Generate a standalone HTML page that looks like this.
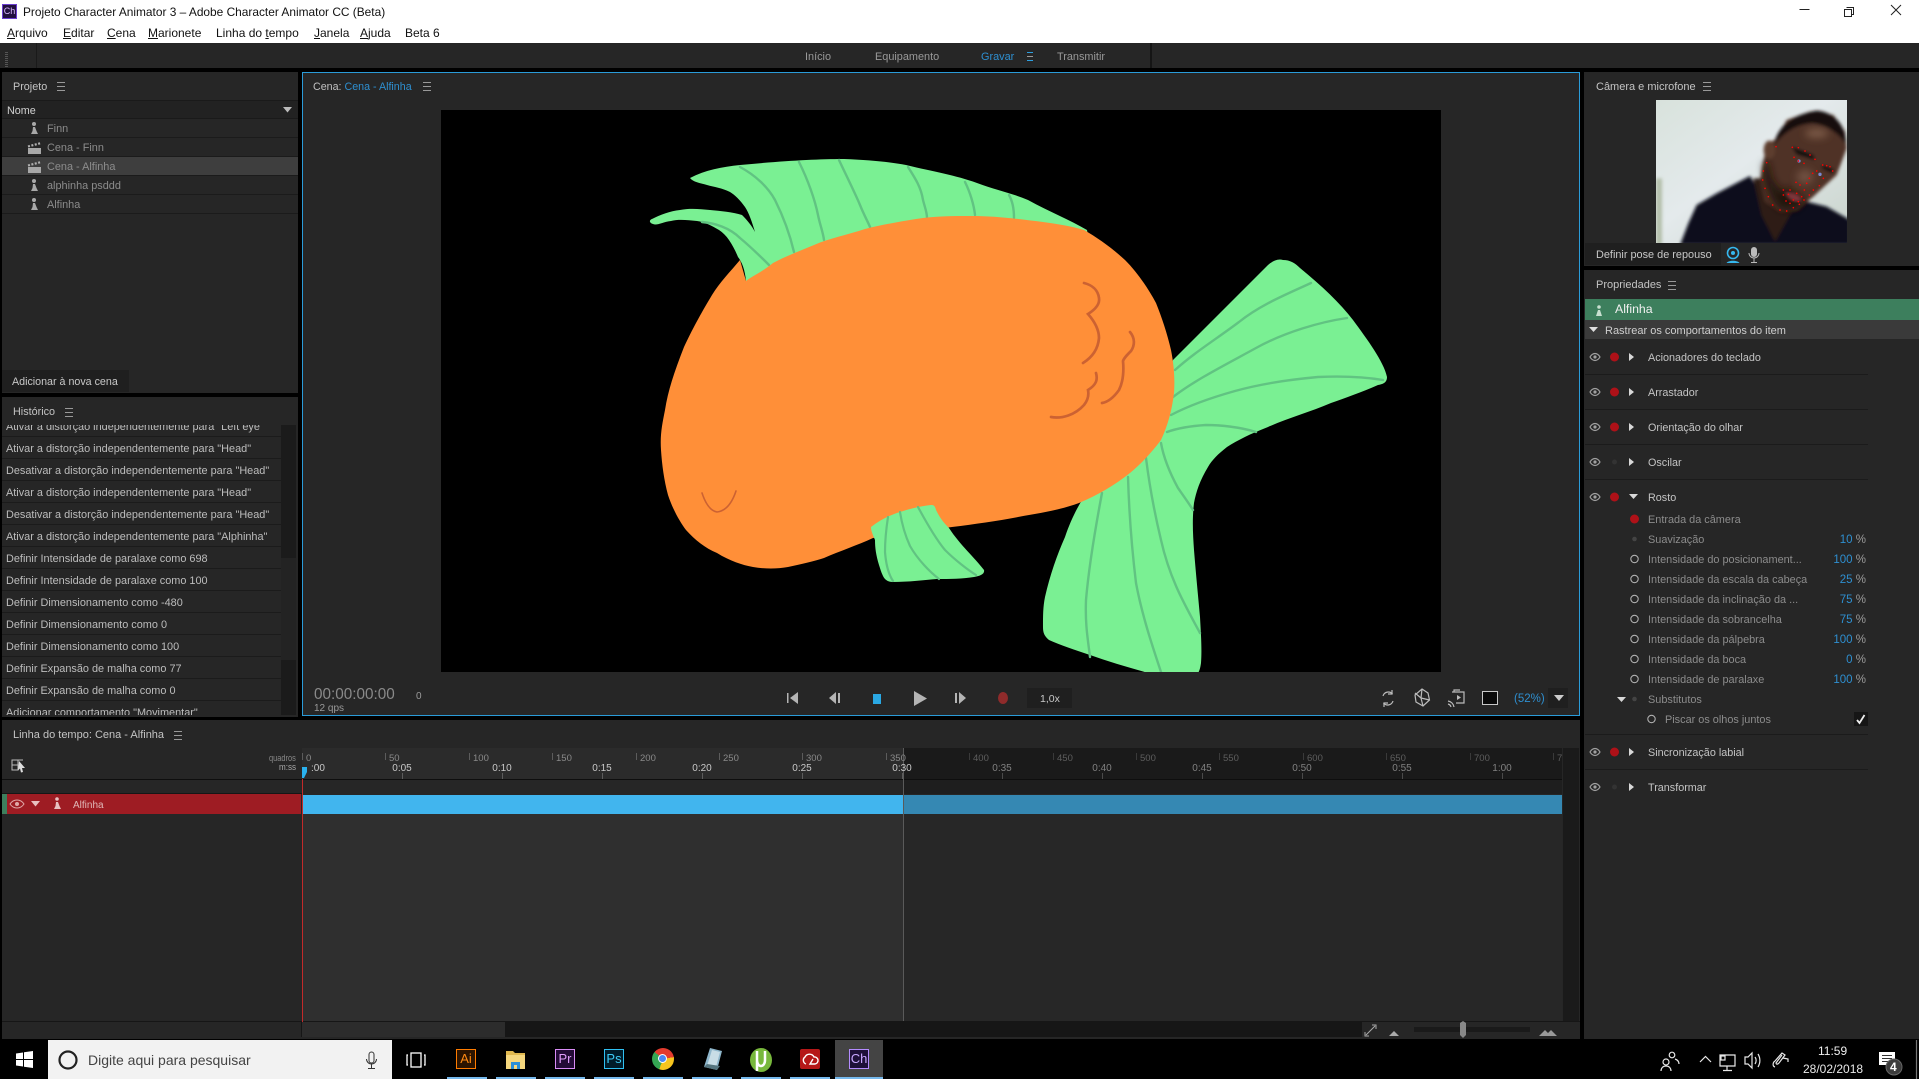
<!DOCTYPE html>
<html lang="pt"><head><meta charset="utf-8"><title>Adobe Character Animator</title>
<style>
html,body{margin:0;padding:0;background:#000;}
body{position:relative;width:1919px;height:1079px;overflow:hidden;font-family:"Liberation Sans",sans-serif;font-size:11px;color:#aaa;}
.b{position:absolute;}
.t{position:absolute;white-space:nowrap;line-height:14px;}
svg{position:absolute;overflow:visible;}
.p{background:#262626;position:absolute;}
.m{position:absolute;width:8px;height:7px;border-top:1px solid #999;border-bottom:1px solid #999;}
.m:after{content:"";position:absolute;left:0;right:0;top:3px;height:1px;background:#999;}
.sep{position:absolute;height:1px;background:#1b1b1b;}
.v{position:absolute;white-space:nowrap;line-height:14px;right:53px;color:#2e8fd0;font-size:11.5px;margin-top:1px;}
.v i{font-style:normal;color:#9a9a9a;}
.h{color:#c4c4c4;font-size:10.8px;margin-top:1px;}
.n{color:#8c8c8c;font-size:10.9px;margin-top:1px;}
.r{color:#bdbdbd;font-size:10.9px;margin-top:1px;}
.f{font-size:9.5px;color:#8a8a8a;margin-top:1px;}
.f2{font-size:9.5px;color:#5e5e5e;margin-top:1px;}
.s{font-size:10px;color:#c8c8c8;transform:translateX(-50%);margin-top:1px;}
.s2{font-size:10px;color:#808080;transform:translateX(-50%);margin-top:1px;}
.tk{position:absolute;width:1px;background:#5c5c5c;}
.ub{position:absolute;top:1077px;height:2px;background:#76b9ed;width:40px;}
.ap{position:absolute;top:1049px;width:18px;height:18px;border:1px solid;text-align:center;line-height:18px;font-size:13px;}
</style></head><body>

<!-- title bar -->
<div class="b" style="left:0;top:0;width:1919px;height:43px;background:#fff"></div>
<div class="b" style="left:2px;top:4px;width:13px;height:13px;background:#22103f;border:1px solid #6b3fd0;color:#d8b8ff;font-size:9px;line-height:13px;text-align:center">Ch</div>
<div class="t" style="left:23px;top:5px;color:#111;font-size:11.9px">Projeto Character Animator 3 – Adobe Character Animator CC (Beta)</div>
<div class="t" style="left:7px;top:26px;color:#111;font-size:12px"><u>A</u>rquivo</div>
<div class="t" style="left:63px;top:26px;color:#111;font-size:12px"><u>E</u>ditar</div>
<div class="t" style="left:107px;top:26px;color:#111;font-size:12px"><u>C</u>ena</div>
<div class="t" style="left:148px;top:26px;color:#111;font-size:12px"><u>M</u>arionete</div>
<div class="t" style="left:216px;top:26px;color:#111;font-size:12px">Linha do <u>t</u>empo</div>
<div class="t" style="left:314px;top:26px;color:#111;font-size:12px"><u>J</u>anela</div>
<div class="t" style="left:360px;top:26px;color:#111;font-size:12px"><u>A</u>juda</div>
<div class="t" style="left:405px;top:26px;color:#111;font-size:12px">Beta 6</div>
<svg style="left:0;top:0" width="1919" height="43" fill="none" stroke="#222" stroke-width="1">
<path d="M1799.5 9.5h10"/><path d="M1846.5 7.5h7v7h-2M1844.5 9.5h7v7h-7z"/><path d="M1891 5l10 10M1901 5l-10 10"/></svg>

<!-- toolbar -->
<div class="p" style="left:0;top:43px;width:1919px;height:25px"></div>
<div class="b" style="left:5px;top:52px;width:3px;height:16px;background:repeating-linear-gradient(#555 0 1px,#262626 1px 2px)"></div>
<div class="b" style="left:36px;top:43px;width:1px;height:25px;background:#1a1a1a"></div>
<div class="b" style="left:1150px;top:43px;width:2px;height:25px;background:#151515"></div>
<div class="t" style="left:805px;top:50px;color:#999;font-size:10.9px">Início</div>
<div class="t" style="left:875px;top:50px;color:#999;font-size:10.9px">Equipamento</div>
<div class="t" style="left:981px;top:50px;color:#2e8fd0;font-size:10.9px">Gravar</div>
<div class="m" style="left:1027px;top:52px;width:6px;border-color:#2e9fe0"></div>
<div class="t" style="left:1057px;top:50px;color:#999;font-size:10.9px">Transmitir</div>

<!-- project panel -->
<div class="p" style="left:2px;top:72px;width:296px;height:321px"></div>
<div class="t h" style="left:13px;top:79px">Projeto</div><div class="m" style="left:57px;top:82px"></div>
<div class="b" style="left:2px;top:100px;width:296px;height:19px;background:#222;border-top:1px solid #1a1a1a;border-bottom:1px solid #1a1a1a;box-sizing:border-box"></div>
<div class="t" style="left:7px;top:104px;color:#d2d2d2;font-size:10.8px">Nome</div>
<svg style="left:283px;top:107px" width="10" height="6"><path d="M0 0h9L4.500 5.500z" fill="#bbb"/></svg>
<div class="b" style="left:2px;top:157px;width:296px;height:18px;background:#3e3e3e"></div>
<div class="sep" style="left:2px;top:137px;width:296px"></div><div class="sep" style="left:2px;top:156px;width:296px"></div><div class="sep" style="left:2px;top:175px;width:296px"></div><div class="sep" style="left:2px;top:194px;width:296px"></div><div class="sep" style="left:2px;top:213px;width:296px"></div>
<div class="t n" style="left:47px;top:121px">Finn</div>
<div class="t n" style="left:47px;top:140px">Cena - Finn</div>
<div class="t n" style="left:47px;top:159px">Cena - Alfinha</div>
<div class="t n" style="left:47px;top:178px">alphinha psddd</div>
<div class="t n" style="left:47px;top:197px">Alfinha</div>
<svg style="left:0;top:0" width="60" height="220" fill="#a8a8a8">
<g><circle cx="34" cy="124" r="2"/><path d="M33 127h2l1.500 4 1.500 3h-7l1.500-3z"/></g>
<g transform="translate(0,57)"><circle cx="34" cy="124" r="2"/><path d="M33 127h2l1.500 4 1.500 3h-7l1.500-3z"/></g>
<g transform="translate(0,76)"><circle cx="34" cy="124" r="2"/><path d="M33 127h2l1.500 4 1.500 3h-7l1.500-3z"/></g>
<path d="M28 148h13v6H28z"/><path d="M28 146.500l13-3.500" stroke="#b0b0b0" stroke-width="2.200" stroke-dasharray="2 1.500" fill="none"/>
<path d="M28 167h13v6H28z"/><path d="M28 165.500l13-3.500" stroke="#b0b0b0" stroke-width="2.200" stroke-dasharray="2 1.500" fill="none"/>
</svg>
<div class="b" style="left:2px;top:370px;width:127px;height:22px;background:#1f1f1f"></div>
<div class="t" style="left:12px;top:375px;color:#c8c8c8;font-size:10.7px">Adicionar à nova cena</div>

<!-- history panel -->
<div class="p" style="left:2px;top:397px;width:296px;height:320px"></div>
<div class="t h" style="left:13px;top:404px">Histórico</div><div class="m" style="left:65px;top:408px"></div>
<div class="b" style="left:281px;top:425px;width:15px;height:290px;background:#1b1b1b"></div>
<div class="b" style="left:281px;top:558px;width:15px;height:102px;background:#232323"></div>
<div class="b" style="left:2px;top:425px;width:279px;height:290px;overflow:hidden">
<div class="t r" style="left:4px;top:-6px">Ativar a distorção independentemente para "Left eye"</div>
<div class="t r" style="left:4px;top:16px">Ativar a distorção independentemente para "Head"</div>
<div class="t r" style="left:4px;top:38px">Desativar a distorção independentemente para "Head"</div>
<div class="t r" style="left:4px;top:60px">Ativar a distorção independentemente para "Head"</div>
<div class="t r" style="left:4px;top:82px">Desativar a distorção independentemente para "Head"</div>
<div class="t r" style="left:4px;top:104px">Ativar a distorção independentemente para "Alphinha"</div>
<div class="t r" style="left:4px;top:126px">Definir Intensidade de paralaxe como 698</div>
<div class="t r" style="left:4px;top:148px">Definir Intensidade de paralaxe como 100</div>
<div class="t r" style="left:4px;top:170px">Definir Dimensionamento como -480</div>
<div class="t r" style="left:4px;top:192px">Definir Dimensionamento como 0</div>
<div class="t r" style="left:4px;top:214px">Definir Dimensionamento como 100</div>
<div class="t r" style="left:4px;top:236px">Definir Expansão de malha como 77</div>
<div class="t r" style="left:4px;top:258px">Definir Expansão de malha como 0</div>
<div class="t r" style="left:4px;top:280px">Adicionar comportamento "Movimentar"</div>
<div class="sep" style="left:0;top:11px;width:279px"></div><div class="sep" style="left:0;top:33px;width:279px"></div><div class="sep" style="left:0;top:55px;width:279px"></div><div class="sep" style="left:0;top:77px;width:279px"></div><div class="sep" style="left:0;top:99px;width:279px"></div><div class="sep" style="left:0;top:121px;width:279px"></div><div class="sep" style="left:0;top:143px;width:279px"></div><div class="sep" style="left:0;top:165px;width:279px"></div><div class="sep" style="left:0;top:187px;width:279px"></div><div class="sep" style="left:0;top:209px;width:279px"></div><div class="sep" style="left:0;top:231px;width:279px"></div><div class="sep" style="left:0;top:253px;width:279px"></div><div class="sep" style="left:0;top:275px;width:279px"></div>
</div>

<!-- scene panel -->
<div class="p" style="left:302px;top:72px;width:1276px;height:642px;border:1px solid #2a9bd8"></div>
<div class="t" style="left:313px;top:80px;color:#c0c0c0;font-size:10.7px">Cena: <span style="color:#2e8fd0">Cena - Alfinha</span></div>
<div class="m" style="left:423px;top:82px"></div>
<div class="b" style="left:441px;top:110px;width:1000px;height:562px;background:#000"></div>

<!-- fish -->
<svg style="left:0;top:0" width="1919" height="1079">
<defs><clipPath id="cv"><rect x="441" y="110" width="1000" height="562"/></clipPath></defs>
<g clip-path="url(#cv)">
<!-- dorsal fin -->
<path fill="#7af093" d="M690 178C705 170 722 167 740 165C783 161 815 159 844 159C870 160 890 162 906 165C935 172 955 175 977 183C995 190 1012 193 1028 200C1050 212 1070 220 1087 230L1100 300L800 300L746 281C745 270 742 262 738 257C733 245 727 235 719 230C712 226 705 222 697 221C688 220 678 219 671 221C662 222 657 226 653 224C649 223 649 220 652 219C660 215 670 211 680 210C690 208 700 209 710 210C720 211 733 212 742 215C747 220 752 226 755 232C752 222 749 213 745 207C740 200 735 195 730 192C722 188 714 187 707 185C700 183 693 182 690 178Z"/>
<g fill="none" stroke="#61c382" stroke-width="2.400" stroke-linecap="round">
<path d="M740 167C755 175 768 187 775 200C785 220 790 235 794 252"/>
<path d="M799 162C808 180 815 200 818 215C820 225 823 232 824 240"/>
<path d="M839 160C846 175 855 193 860 205C864 215 868 222 870 227"/>
<path d="M908 167C915 178 921 187 923 200C925 208 927 212 927 218"/>
<path d="M965 182C970 192 974 205 975 215"/>
<path d="M1009 195C1013 202 1014 210 1014 218"/>
<path d="M702 222C715 223 730 228 740 238C752 248 762 258 769 265"/>
</g>
<!-- tail -->
<path fill="#7af093" d="M1173 360L1268 265Q1276 258 1283 260C1290 260 1295 263 1300 268C1322 286 1340 303 1353 320C1367 339 1384 362 1387 377C1387 382 1384 384 1378 385C1362 392 1345 398 1331 403C1310 412 1288 418 1268 427C1250 434 1238 440 1227 447C1218 454 1212 460 1208 467C1200 480 1196 492 1194 503C1192 520 1193 535 1194 550C1196 575 1198 595 1200 617C1201 635 1202 650 1201 663C1200 670 1199 672 1197 674L1152 674C1130 668 1110 662 1090 655C1075 650 1060 645 1049 640C1044 636 1043 632 1043 627C1043 615 1043 607 1045 597C1050 575 1057 555 1065 537C1070 522 1076 510 1082 500L1140 440Z"/>
<g fill="none" stroke="#61c382" stroke-width="2.400" stroke-linecap="round">
<path d="M1311 283C1285 295 1260 305 1239 322C1215 340 1195 352 1175 370"/>
<path d="M1347 318C1320 322 1285 332 1256 348C1225 365 1195 380 1173 397"/>
<path d="M1383 380C1365 377 1340 376 1318 377C1285 380 1260 384 1235 391C1210 398 1190 405 1171 415"/>
<path d="M1256 432C1240 427 1220 425 1206 425C1190 426 1178 428 1167 432"/>
<path d="M1161 443C1164 460 1172 477 1178 488C1185 498 1190 505 1193 510"/>
<path d="M1146 458C1150 490 1155 515 1161 540C1170 580 1185 605 1200 633"/>
<path d="M1128 477C1129 510 1132 550 1136 583C1142 615 1152 645 1161 672"/>
<path d="M1102 493C1095 530 1089 565 1086 600C1085 625 1088 640 1090 657"/>
</g>
<!-- body -->
<path fill="#ff8f38" d="M746 281L740 260C730 272 720 282 712 295C700 315 692 330 684 347C675 370 668 390 665 410C662 425 660 435 661 450C662 465 664 480 668 495C673 510 680 522 686 530C695 540 705 548 717 553C730 561 742 565 753 567C765 569 777 569 788 567C802 564 815 561 824 558C840 551 858 545 873 538L952 527C975 524 998 521 1018 517C1040 513 1060 510 1079 503C1098 495 1115 485 1130 473C1142 463 1152 452 1161 440C1168 425 1172 410 1174 393C1175 380 1174 365 1171 350C1167 333 1162 318 1156 303C1148 288 1137 272 1125 260C1112 248 1098 238 1084 230C1071 226 1057 224 1043 222C1020 219 995 216 972 216C953 216 935 216 916 219C898 222 880 225 865 229C847 235 830 238 814 245C800 251 786 256 773 263C762 272 754 275 746 281Z"/>
<!-- gills -->
<g fill="none" stroke="#cc6232" stroke-width="2.700" stroke-linecap="round">
<path d="M1084 283C1092 285 1098 290 1099 298C1100 304 1096 309 1088 314C1095 322 1099 330 1099 338C1098 350 1091 358 1083 363" />
<path d="M1130 332C1135 338 1135 345 1131 351C1127 355 1124 358 1123 361C1124 372 1123 382 1119 390C1114 397 1108 402 1102 403"/>
<path d="M1096 373C1098 380 1096 385 1088 390C1089 395 1088 400 1084 405C1075 415 1062 419 1051 417"/>
<path stroke-width="1.600" d="M702 493C706 505 711 511 717 512C726 511 732 503 736 491"/>
</g>
<!-- pectoral -->
<path fill="#7af093" d="M871 527C880 520 890 515 900 512C912 508 922 506 931 505C934 505 935 506 936 510C941 520 945 524 949 528C960 545 975 558 984 570C985 574 980 576 974 577C962 579 950 579 937 579C925 580 908 582 893 582C888 582 885 580 883 576C881 572 880 568 879 565C876 555 875 548 875 540C872 533 871 530 871 527Z"/>
<g fill="none" stroke="#61c382" stroke-width="2.200" stroke-linecap="round">
<path d="M888 517C886 530 885 542 885 552C886 565 889 575 893 581"/>
<path d="M900 512C902 525 905 535 910 546C918 560 930 572 939 579"/>
<path d="M918 507C925 520 935 538 945 550C955 560 968 570 976 575"/>
</g>
</g>
</svg>

<!-- transport -->
<div class="t" style="left:314px;top:688px;color:#8a8a8a;font-size:15.300px">00:00:00:00</div>
<div class="t" style="left:416px;top:690px;color:#9a9a9a;font-size:10px">0</div>
<div class="t" style="left:314px;top:702px;color:#9a9a9a;font-size:10px">12 qps</div>
<svg style="left:0;top:0" width="1919" height="720">
<g fill="#b4b4b4">
<path d="M787 693h1.500v10H787zM798 692v12l-8-6z"/>
<path d="M838 693h2v10h-2zM836 692v12l-7-6z"/>
<path d="M914 691l13 7.500-13 7.500z"/>
<path d="M955 693h2v10h-2zM959 692l7 6-7 6z"/>
</g>
<rect x="873" y="694" width="8" height="10" fill="#2aa8e3"/>
<ellipse cx="1003" cy="698" rx="5" ry="6" fill="#8f2b2b"/>
<rect x="1027" y="688" width="45" height="20" fill="#1f1f1f"/>
<rect x="1548" y="688" width="20" height="20" fill="#1f1f1f"/>
<path d="M1554 695h10l-5 6z" fill="#ccc"/>
<g fill="none" stroke="#bbb" stroke-width="1.200">
<path d="M1383 696a5.500 5.500 0 0 1 9.500-2M1393 701a5.500 5.500 0 0 1-9.500 2"/>
<path d="M1392 690v4h-4M1384 707v-4h4"/>
<path d="M1422 689l6 4 1.500 7-6.500 6-7-4-1-7zM1422 689l-1 9 8.500 2M1421 698l-6-5M1421 698l2 8"/>
<path d="M1452 692h12v11h-8M1454 692v-2h6"/>
<path d="M1448 701a7 7 0 0 1 6 6M1448 704a4 4 0 0 1 3 3"/>
</g>
<path d="M1457 695l4 2.500-4 2.500z" fill="#bbb"/>
<rect x="1482.500" y="691.500" width="15" height="13" fill="#0a0a0a" stroke="#c8c8c8"/>
</svg>
<div class="t" style="left:1040px;top:692px;color:#c8c8c8;font-size:10.500px">1,0x</div>
<div class="t" style="left:1514px;top:692px;color:#2e8fd0;font-size:11.500px">(52%)</div>

<!-- timeline panel -->
<div class="p" style="left:2px;top:720px;width:1578px;height:319px"></div>
<div class="t h" style="left:13px;top:727px;font-size:11px">Linha do tempo: Cena - Alfinha</div>
<div class="m" style="left:174px;top:731px"></div>
<div class="b" style="left:302px;top:748px;width:601px;height:31px;background:#2b2b2b"></div>
<div class="b" style="left:903px;top:748px;width:659px;height:31px;background:#1a1a1a"></div>
<div class="b" style="left:2px;top:779px;width:1560px;height:1px;background:#0e0e0e"></div>
<div class="b" style="left:903px;top:780px;width:659px;height:14px;background:#1e1e1e"></div>
<div class="b" style="left:302px;top:814px;width:601px;height:207px;background:#2f2f2f"></div>
<div class="b" style="left:903px;top:814px;width:659px;height:207px;background:#272727"></div>
<div class="b" style="left:1563px;top:748px;width:16px;height:273px;background:#1a1a1a"></div>
<div class="b" style="left:2px;top:1021px;width:1578px;height:1px;background:#161616"></div>
<div class="b" style="left:504px;top:1022px;width:858px;height:15px;background:#161616"></div>
<div class="b" style="left:301px;top:1022px;width:203px;height:15px;background:#2c2c2c;border-left:1px solid #161616"></div>
<div class="b" style="left:2px;top:793px;width:300px;height:1px;background:#161616"></div>
<div class="b" style="left:2px;top:794px;width:5px;height:20px;background:#3d7f5d"></div>
<div class="b" style="left:7px;top:794px;width:294px;height:20px;background:#9e1c23"></div>
<div class="b" style="left:302px;top:795px;width:601px;height:19px;background:#41b5ee"></div>
<div class="b" style="left:903px;top:795px;width:659px;height:19px;background:#3588b3"></div>
<div class="b" style="left:903px;top:748px;width:1px;height:273px;background:#5a5a5a"></div>
<div class="b" style="left:302px;top:779px;width:1px;height:243px;background:#c22a2a"></div>
<div class="t" style="left:73px;top:799px;color:#e0b8b8;font-size:10px">Alfinha</div>
<svg style="left:0;top:0" width="320" height="830" >
<path d="M10 804c2-3 4-4 7-4s5 1 7 4c-2 3-4 4-7 4s-5-1-7-4z" fill="none" stroke="#e0a8a8"/>
<circle cx="17" cy="804" r="2" fill="#e0a8a8"/>
<path d="M31 801h9l-4.500 5.500z" fill="#e8c0c0"/>
<circle cx="57" cy="799" r="1.800" fill="#e8c0c0"/><path d="M56 802h2l1.500 4 1.500 3h-7l1.500-3z" fill="#e8c0c0"/>
<path d="M302 767l5 0v5l-3 6-2 0z" fill="#2ab1ee"/>
<g fill="none" stroke="#bbb"><path d="M12 760h6v5h-6zM12 765h6v5h-6zM18 760h5"/></g>
<path d="M19 761l6 7-3 0 1 4-2 .5-1-4-2 2z" fill="#ddd"/>
</svg>
<div class="t" style="left:269px;top:752px;color:#888;font-size:9.500px;transform:scaleX(.78);transform-origin:left">quadros</div>
<div class="t" style="left:279px;top:761px;color:#aaa;font-size:9.500px;transform:scaleX(.85);transform-origin:left">m:ss</div>
<div class="t" style="left:311px;top:762px;color:#c8c8c8;font-size:10px">:00</div>

<!-- ruler labels -->
<div class="tk" style="left:302px;top:753px;height:7px"></div><div class="t f" style="left:306px;top:751px">0</div>
<div class="tk" style="left:385px;top:753px;height:7px"></div><div class="t f" style="left:389px;top:751px">50</div>
<div class="tk" style="left:469px;top:753px;height:7px"></div><div class="t f" style="left:473px;top:751px">100</div>
<div class="tk" style="left:552px;top:753px;height:7px"></div><div class="t f" style="left:556px;top:751px">150</div>
<div class="tk" style="left:636px;top:753px;height:7px"></div><div class="t f" style="left:640px;top:751px">200</div>
<div class="tk" style="left:719px;top:753px;height:7px"></div><div class="t f" style="left:723px;top:751px">250</div>
<div class="tk" style="left:802px;top:753px;height:7px"></div><div class="t f" style="left:806px;top:751px">300</div>
<div class="tk" style="left:886px;top:753px;height:7px"></div><div class="t f" style="left:890px;top:751px">350</div>
<div class="tk" style="left:969px;top:753px;height:7px;background:#3a3a3a"></div><div class="t f2" style="left:973px;top:751px">400</div>
<div class="tk" style="left:1053px;top:753px;height:7px;background:#3a3a3a"></div><div class="t f2" style="left:1057px;top:751px">450</div>
<div class="tk" style="left:1136px;top:753px;height:7px;background:#3a3a3a"></div><div class="t f2" style="left:1140px;top:751px">500</div>
<div class="tk" style="left:1219px;top:753px;height:7px;background:#3a3a3a"></div><div class="t f2" style="left:1223px;top:751px">550</div>
<div class="tk" style="left:1303px;top:753px;height:7px;background:#3a3a3a"></div><div class="t f2" style="left:1307px;top:751px">600</div>
<div class="tk" style="left:1386px;top:753px;height:7px;background:#3a3a3a"></div><div class="t f2" style="left:1390px;top:751px">650</div>
<div class="tk" style="left:1470px;top:753px;height:7px;background:#3a3a3a"></div><div class="t f2" style="left:1474px;top:751px">700</div>
<div class="tk" style="left:1553px;top:753px;height:7px;background:#3a3a3a"></div><div class="b" style="left:1557px;top:751px;width:5px;height:15px;overflow:hidden"><div class="t f2" style="left:0;top:0">750</div></div>

<div class="t s" style="left:402px;top:761px">0:05</div><div class="tk" style="left:402px;top:773px;height:6px"></div>
<div class="t s" style="left:502px;top:761px">0:10</div><div class="tk" style="left:502px;top:773px;height:6px"></div>
<div class="t s" style="left:602px;top:761px">0:15</div><div class="tk" style="left:602px;top:773px;height:6px"></div>
<div class="t s" style="left:702px;top:761px">0:20</div><div class="tk" style="left:702px;top:773px;height:6px"></div>
<div class="t s" style="left:802px;top:761px">0:25</div><div class="tk" style="left:802px;top:773px;height:6px"></div>
<div class="t s" style="left:902px;top:761px">0:30</div><div class="tk" style="left:902px;top:773px;height:6px"></div>
<div class="t s2" style="left:1002px;top:761px">0:35</div><div class="tk" style="left:1002px;top:773px;height:6px;background:#4a4a4a"></div>
<div class="t s2" style="left:1102px;top:761px">0:40</div><div class="tk" style="left:1102px;top:773px;height:6px;background:#4a4a4a"></div>
<div class="t s2" style="left:1202px;top:761px">0:45</div><div class="tk" style="left:1202px;top:773px;height:6px;background:#4a4a4a"></div>
<div class="t s2" style="left:1302px;top:761px">0:50</div><div class="tk" style="left:1302px;top:773px;height:6px;background:#4a4a4a"></div>
<div class="t s2" style="left:1402px;top:761px">0:55</div><div class="tk" style="left:1402px;top:773px;height:6px;background:#4a4a4a"></div>
<div class="t s2" style="left:1502px;top:761px">1:00</div><div class="tk" style="left:1502px;top:773px;height:6px;background:#4a4a4a"></div>

<!-- timeline zoom -->
<svg style="left:1360px;top:1020px" width="210" height="20">
<g fill="none" stroke="#aaa"><path d="M6 15l9-9M12 5h4v4M5 12v4h4"/></g>
<path d="M29 16l5-5 5 5z" fill="#aaa"/>
<rect x="54" y="7" width="116" height="5" fill="#1a1a1a"/>
<path d="M100 3l3-2 3 2v12l-3 3-3-3z" fill="#888"/>
<path d="M179 16l6-6 3 3 3-3 6 6z" fill="#999"/>
</svg>

<!-- camera panel -->
<div class="p" style="left:1584px;top:72px;width:335px;height:194px"></div>
<div class="t h" style="left:1596px;top:79px;font-size:11px">Câmera e microfone</div><div class="m" style="left:1703px;top:82px"></div>
<div class="b" style="left:1585px;top:243px;width:136px;height:22px;background:#1f1f1f"></div>
<div class="t" style="left:1596px;top:248px;color:#c8c8c8;font-size:10.9px">Definir pose de repouso</div>
<svg style="left:1650px;top:95px" width="200" height="150" viewBox="0 0 600 450">
<defs>
<linearGradient id="bg" x1="0" y1="0" x2="1" y2="1"><stop offset="0" stop-color="#d8e2dc"/><stop offset=".45" stop-color="#e4eaec"/><stop offset="1" stop-color="#c8d3cb"/></linearGradient>
<clipPath id="ph"><rect x="18" y="15" width="573" height="429"/></clipPath>
<filter id="bl" x="-5%" y="-5%" width="110%" height="110%"><feGaussianBlur stdDeviation="5"/></filter>
<filter id="bl2" x="-20%" y="-20%" width="140%" height="140%"><feGaussianBlur stdDeviation="12"/></filter>
</defs>
<g clip-path="url(#ph)">
<rect x="18" y="15" width="573" height="429" fill="url(#bg)"/>
<g filter="url(#bl)">
<path fill="#b4bfab" d="M18 250h18v200H18z"/>
<path fill="#090c1c" d="M90 450L115 385L140 330L200 295L300 243L335 300L400 355L470 320L530 335L600 375V450Z"/>
<path fill="#2e1c14" d="M310 250L335 360L375 440L425 350L350 250Z"/>
<path fill="#4f3225" d="M350 150L380 130L410 75L480 50L550 60L585 110L590 160L560 240L490 305L440 345L390 350L345 320L330 260L340 200Z"/>
<ellipse cx="358" cy="165" rx="17" ry="28" fill="#5d3d2e"/>
<path fill="#15100f" d="M372 150C380 100 420 60 500 47C550 50 590 90 588 150C570 115 530 92 490 85C440 85 400 115 372 150Z"/>
<path fill="#100a0a" d="M425 155L490 180L495 195L440 178ZM515 210L550 222L548 235L518 222Z"/>
</g>
<g filter="url(#bl2)">
<path fill="#20120d" d="M340 205L345 260L370 320L390 345L440 345L465 320L420 280L390 285L365 250L355 200Z"/>
<ellipse cx="500" cy="115" rx="35" ry="14" fill="#7b5a46"/>
<ellipse cx="465" cy="245" rx="25" ry="22" fill="#705040"/>
</g>
<path fill="#7d343a" d="M405 292C430 290 454 300 454 316C440 328 414 316 405 292Z" filter="url(#bl)"/>
<circle cx="447" cy="198" r="5" fill="#7a88d0"/><circle cx="510" cy="238" r="5" fill="#7a88d0"/>
<path fill="none" stroke="#ff0000" stroke-width="5" stroke-linecap="round" d="M378 155h.1M427 157h.1M445 158h.1M465 168h.1M480 180h.1M495 193h.1M432 187h.1M445 198h.1M462 205h.1M518 210h.1M530 212h.1M540 215h.1M548 228h.1M500 228h.1M520 250h.1M488 235h.1M478 250h.1M470 265h.1M438 262h.1M450 270h.1M463 285h.1M478 300h.1M490 285h.1M508 272h.1M350 203h.1M340 228h.1M338 255h.1M345 280h.1M355 305h.1M368 330h.1M390 345h.1M410 348h.1M430 338h.1M448 328h.1M462 315h.1M400 285h.1M420 285h.1M440 295h.1M455 305h.1M415 298h.1M430 315h.1M445 320h.1M400 300h.1M408 318h.1M420 325h.1"/>
</g>
</svg>
<svg style="left:1725px;top:244px" width="40" height="22">
<circle cx="8" cy="9" r="5.500" fill="none" stroke="#36b8ef" stroke-width="1.600"/><circle cx="8" cy="9" r="2" fill="#36b8ef"/>
<path d="M1.500 19c2-3 11-3 13 0z" fill="#36b8ef"/>
<rect x="26" y="3" width="6" height="10" rx="3" fill="#bbb"/>
<path d="M24 9a5 5 0 0 0 10 0M29 14v4M26 18.500h6" fill="none" stroke="#bbb"/>
</svg>

<!-- properties -->
<div class="p" style="left:1584px;top:270px;width:335px;height:769px"></div>
<div class="t h" style="left:1596px;top:277px;font-size:11px">Propriedades</div><div class="m" style="left:1668px;top:281px"></div>
<div class="b" style="left:1585px;top:299px;width:334px;height:21px;background:#3d7f5d"></div>
<div class="t" style="left:1615px;top:302px;color:#f0f0f0;font-size:12.300px">Alfinha</div>
<div class="b" style="left:1585px;top:320px;width:334px;height:19px;background:#3a3a3a"></div>
<div class="t" style="left:1605px;top:324px;color:#cfcfcf;font-size:11px">Rastrear os comportamentos do item</div>

<div class="sep" style="left:1585px;top:374px;width:283px"></div>
<div class="sep" style="left:1585px;top:409px;width:283px"></div>
<div class="sep" style="left:1585px;top:444px;width:283px"></div>
<div class="sep" style="left:1585px;top:479px;width:283px"></div>
<div class="sep" style="left:1585px;top:734px;width:283px"></div>
<div class="sep" style="left:1585px;top:769px;width:283px"></div>

<div class="t h" style="left:1648px;top:350px">Acionadores do teclado</div>
<div class="t h" style="left:1648px;top:385px">Arrastador</div>
<div class="t h" style="left:1648px;top:420px">Orientação do olhar</div>
<div class="t h" style="left:1648px;top:455px">Oscilar</div>
<div class="t h" style="left:1648px;top:490px">Rosto</div>
<div class="t n" style="left:1648px;top:512px">Entrada da câmera</div>
<div class="t n" style="left:1648px;top:532px">Suavização</div>
<div class="t n" style="left:1648px;top:552px">Intensidade do posicionament...</div>
<div class="t n" style="left:1648px;top:572px">Intensidade da escala da cabeça</div>
<div class="t n" style="left:1648px;top:592px">Intensidade da inclinação da ...</div>
<div class="t n" style="left:1648px;top:612px">Intensidade da sobrancelha</div>
<div class="t n" style="left:1648px;top:632px">Intensidade da pálpebra</div>
<div class="t n" style="left:1648px;top:652px">Intensidade da boca</div>
<div class="t n" style="left:1648px;top:672px">Intensidade de paralaxe</div>
<div class="t n" style="left:1648px;top:692px">Substitutos</div>
<div class="t n" style="left:1665px;top:712px">Piscar os olhos juntos</div>
<div class="t h" style="left:1648px;top:745px">Sincronização labial</div>
<div class="t h" style="left:1648px;top:780px">Transformar</div>

<div class="v" style="top:532px">10 <i>%</i></div>
<div class="v" style="top:552px">100 <i>%</i></div>
<div class="v" style="top:572px">25 <i>%</i></div>
<div class="v" style="top:592px">75 <i>%</i></div>
<div class="v" style="top:612px">75 <i>%</i></div>
<div class="v" style="top:632px">100 <i>%</i></div>
<div class="v" style="top:652px">0 <i>%</i></div>
<div class="v" style="top:672px">100 <i>%</i></div>

<svg style="left:0;top:0" width="1919" height="1039">
<circle cx="1599" cy="307" r="1.800" fill="#c8e0d0"/><path d="M1598 310h2l2 6h-6z" fill="#c8e0d0"/>
<path d="M1589 327h9l-4.500 5z" fill="#ddd"/>
<g fill="none" stroke="#a0a0a0" stroke-width="1.200">
<path d="M1590 357c1.500-2.500 3-3.500 5-3.500s3.500 1 5 3.500c-1.500 2.500-3 3.500-5 3.500s-3.500-1-5-3.500zM1590 392c1.500-2.500 3-3.500 5-3.500s3.500 1 5 3.500c-1.500 2.500-3 3.500-5 3.500s-3.500-1-5-3.500zM1590 427c1.500-2.500 3-3.500 5-3.500s3.500 1 5 3.500c-1.500 2.500-3 3.500-5 3.500s-3.500-1-5-3.500zM1590 462c1.500-2.500 3-3.500 5-3.500s3.500 1 5 3.500c-1.500 2.500-3 3.500-5 3.500s-3.500-1-5-3.500zM1590 497c1.500-2.500 3-3.500 5-3.500s3.500 1 5 3.500c-1.500 2.500-3 3.500-5 3.500s-3.500-1-5-3.500zM1590 752c1.500-2.500 3-3.500 5-3.500s3.500 1 5 3.500c-1.500 2.500-3 3.500-5 3.500s-3.500-1-5-3.500zM1590 787c1.500-2.500 3-3.500 5-3.500s3.500 1 5 3.500c-1.500 2.500-3 3.500-5 3.500s-3.500-1-5-3.500z"/>
</g>
<g fill="#a0a0a0"><circle cx="1595" cy="357" r="1.600"/><circle cx="1595" cy="392" r="1.600"/><circle cx="1595" cy="427" r="1.600"/><circle cx="1595" cy="462" r="1.600"/><circle cx="1595" cy="497" r="1.600"/><circle cx="1595" cy="752" r="1.600"/><circle cx="1595" cy="787" r="1.600"/></g>
<g fill="#ae1118"><circle cx="1614.500" cy="357" r="4.500"/><circle cx="1614.500" cy="392" r="4.500"/><circle cx="1614.500" cy="427" r="4.500"/><circle cx="1614.500" cy="497" r="4.500"/><circle cx="1614.500" cy="752" r="4.500"/><circle cx="1634.500" cy="519" r="4.500"/></g>
<g fill="#333"><circle cx="1614.500" cy="462" r="2.500"/><circle cx="1614.500" cy="787" r="2.500"/></g>
<g fill="#444"><circle cx="1634.500" cy="539" r="2.300"/><circle cx="1634.500" cy="699" r="2.300"/></g>
<g fill="#d8d8d8"><path d="M1629 353v8l5-4zM1629 388v8l5-4zM1629 423v8l5-4zM1629 458v8l5-4zM1629 748v8l5-4zM1629 783v8l5-4z"/>
<path d="M1629 494h9l-4.500 5zM1617 697h9l-4.500 5z"/></g>
<g fill="none" stroke="#b0b0b0" stroke-width="1.100">
<circle cx="1634.500" cy="559" r="3.700"/><circle cx="1634.500" cy="579" r="3.700"/><circle cx="1634.500" cy="599" r="3.700"/><circle cx="1634.500" cy="619" r="3.700"/><circle cx="1634.500" cy="639" r="3.700"/><circle cx="1634.500" cy="659" r="3.700"/><circle cx="1634.500" cy="679" r="3.700"/><circle cx="1651.500" cy="719" r="3.700"/>
</g>
<rect x="1854" y="712" width="14" height="14" fill="#161616"/>
<path d="M1857 720l2.500 3 5-8" fill="none" stroke="#eee" stroke-width="1.800"/>
</svg>

<!-- taskbar -->
<div class="b" style="left:0;top:1040px;width:1919px;height:39px;background:#000"></div>
<div class="b" style="left:48px;top:1040px;width:344px;height:39px;background:#f2f2f2"></div>
<div class="b" style="left:835px;top:1040px;width:48px;height:39px;background:#444"></div>
<svg style="left:0;top:1040px" width="560" height="39">
<path d="M16 13.500l7-1v6.500h-7zM24 12.300l9-1.300v8h-9zM16 20h7v6.500l-7-1zM24 20h9v8l-9-1.300z" fill="#fff"/>
<circle cx="68" cy="20" r="8.500" fill="none" stroke="#222" stroke-width="2.200"/>
<rect x="369" y="12" width="5" height="11" rx="2.500" fill="none" stroke="#333"/>
<path d="M366.500 19a5 5 0 0 0 10 0M371.500 24v4M368 28.500h7" fill="none" stroke="#333"/>
<g fill="none" stroke="#fff" stroke-width="1.300"><rect x="411" y="13" width="10" height="14"/><path d="M408 15h-1v10h1M424 15h1v10h-1"/></g>
<!-- folder -->
<path d="M506 11h7l2 2h10v4h-19z" fill="#e0b84f"/><rect x="506" y="15" width="19" height="14" fill="#f5d77e"/>
<rect x="511" y="22" width="9" height="7" fill="#2a8fd8"/><rect x="514" y="25" width="3" height="4" fill="#f5d77e"/>
</svg>
<div class="t" style="left:88px;top:1053px;color:#444;font-size:14px">Digite aqui para pesquisar</div>
<div class="ap" style="left:456px;background:#2b1400;border-color:#ff7c00;color:#ff8a12">Ai</div>
<div class="ap" style="left:555px;background:#230b36;border-color:#d88cf5;color:#e09cfa">Pr</div>
<div class="ap" style="left:604px;background:#001c2a;border-color:#2fc0f2;color:#3ccbf5">Ps</div>
<div class="ap" style="left:849px;background:#1e1038;border-color:#b48cff;color:#c9a8ff">Ch</div>
<div class="b" style="left:652px;top:1048px;width:22px;height:22px;border-radius:50%;background:conic-gradient(from -50deg,#e33b2e 0 130deg,#f7c51e 130deg 250deg,#35a753 250deg 360deg)"></div>
<div class="b" style="left:658px;top:1054px;width:7px;height:7px;border-radius:50%;background:#4a89f3;border:1.500px solid #fff"></div>
<svg style="left:700px;top:1045px" width="130" height="30">
<path d="M4 22L10 3l12 3-5 19z" fill="#8fb7cc"/><path d="M7 21L12 5l8 2-4 15z" fill="#c8dde6"/><path d="M4 22l13 3 3-4-13-2z" fill="#55757f"/>
<ellipse cx="61" cy="15" rx="11" ry="12" fill="#78b83c"/>
<path d="M57 6v20M57 15c0 4 2 6 4 6s4-2 4-6V6" fill="none" stroke="#fff" stroke-width="2.500"/>
<rect x="100" y="4" width="20" height="20" rx="2" fill="#b51818"/>
<path d="M106 19a4 4 0 0 1-1-7a5 5 0 0 1 9 0a3.500 3.500 0 0 1 1 7h-5l3-5" fill="none" stroke="#fff" stroke-width="1.400"/>
</svg>
<div class="ub" style="left:447px"></div><div class="ub" style="left:496px"></div><div class="ub" style="left:545px"></div><div class="ub" style="left:594px"></div><div class="ub" style="left:643px"></div><div class="ub" style="left:692px"></div><div class="ub" style="left:741px"></div><div class="ub" style="left:790px"></div><div class="ub" style="left:835px;width:48px"></div>

<svg style="left:1650px;top:1040px" width="269" height="39" fill="none" stroke="#e8e8e8" stroke-width="1.200">
<circle cx="22" cy="15" r="2.800"/><circle cx="16" cy="22" r="3"/><path d="M11 31c0-3 2-5 5-5s5 2 5 5M25 19c3 1 4 3 4 5"/>
<path d="M50 22l5.500-5.500L61 22"/>
<path d="M70 15h15v11h-15zM77 26v4M73 30.500h9"/><rect x="71" y="16" width="4" height="4"/>
<path d="M95 17h3l4-4v15l-4-4h-3zM105 17c1.500 2 1.500 5 0 7M108 14c2.500 4 2.500 9 0 13"/>
<path d="M125 27c-3-1-2-5 0-6l7-8 3 2-6 8c-2 2-3 1-3 0l6-8M133 18l5 1 0 3"/>
<path d="M266.500 0v39" stroke="#777"/>
</svg>
<div class="t" style="left:1818px;top:1044px;color:#f0f0f0;font-size:12px">11:59</div>
<div class="t" style="left:1803px;top:1062px;color:#e8e8e8;font-size:12px">28/02/2018</div>
<svg style="left:1875px;top:1048px" width="35" height="30">
<path d="M4 4h16v13h-11l-1 0H4z" fill="#fff"/><path d="M7 7.500h10M7 10.500h10M7 13.500h10" stroke="#333"/>
<circle cx="19" cy="19" r="8" fill="#3c3c3c" stroke="#666"/>
</svg>
<div class="t" style="left:1890px;top:1060px;color:#fff;font-size:12px;font-weight:bold">4</div>
</body></html>
